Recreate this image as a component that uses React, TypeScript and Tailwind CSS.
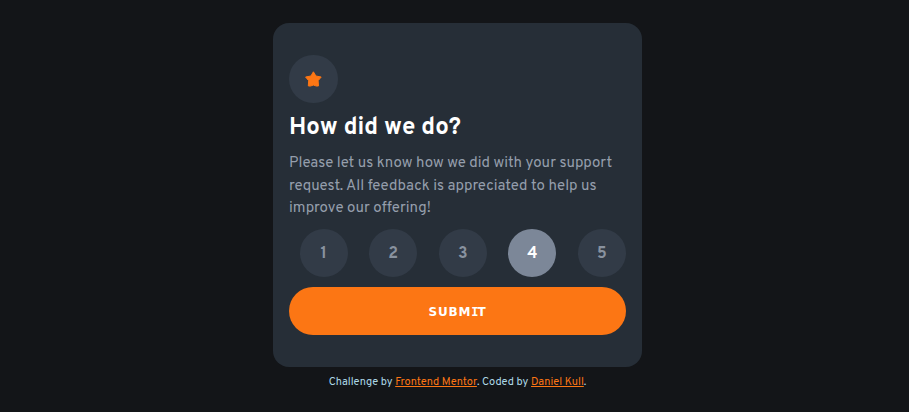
import { useState } from "react";

const ratings = [1, 2, 3, 4, 5];

export default function App() {
  const [selected, setSelected] = useState(4);
  return (
    <main className="flex h-[412px] flex-col items-center bg-[#131518] pt-[23px] pl-[6px] font-['Overpass','Roboto',sans-serif]">
      <section className="flex h-[344px] w-[369px] flex-col rounded-[16px] bg-[#262e37] px-4 pt-8">
        <div className="flex h-12 w-[49px] items-center justify-center rounded-full bg-[#323b47]">
          <svg width="17" height="16" viewBox="0 0 17 16" aria-hidden="true">
            <path
              fill="#fc7614"
              stroke="#fc7614"
              strokeWidth="1"
              strokeLinejoin="round"
              d="M8.4.8 10.9 5 16.2 6 13.1 9.7 13.5 14.9 11.6 15.1 8.4 14.1 5.2 15.1 3.3 14.9 3.7 9.7.6 6 5.9 5Z"
            />
          </svg>
        </div>
        <h1 className="mt-[10px] h-[30px] text-[24px] leading-[30px] font-bold whitespace-nowrap text-white">
          How did we do?
        </h1>
        <p className="mt-[10px] h-[68px] text-[15px] leading-[22.5px] whitespace-nowrap text-[#959eac]">
          Please let us know how we did with your support
          <br />
          request. All feedback is appreciated to help us
          <br />
          improve our offering!
        </p>
        <div className="mt-[8px] flex justify-between pl-[10.6px]">
          {ratings.map((n) => (
            <button
              key={n}
              onClick={() => setSelected(n)}
              className={
                n === selected
                  ? "size-12 rounded-full bg-[#7c8798] pt-[1px] text-base font-bold text-white"
                  : "size-12 rounded-full bg-[#323b47] pt-[1px] text-base font-bold text-[#89929f]"
              }
            >
              {n}
            </button>
          ))}
        </div>
        <button className="mt-[10px] h-12 rounded-full bg-[#fc7614] pt-[2px] font-['Verdana','DejaVu_Sans',sans-serif] text-[12px] font-bold tracking-[0.8px] text-white">
          SUBM<span className="font-['DejaVu_Sans_Mono',monospace] tracking-[-0.9px]">I</span>T
        </button>
      </section>
      <footer className="mt-[7px] text-[11px] leading-[17px] whitespace-nowrap text-[#add8e6]">
        Challenge by <a className="text-[#fc7614] underline" href="#">Frontend Mentor</a>. Coded by{" "}
        <a className="text-[#fc7614] underline" href="#">Daniel Kull</a>.
      </footer>
    </main>
  );
}
